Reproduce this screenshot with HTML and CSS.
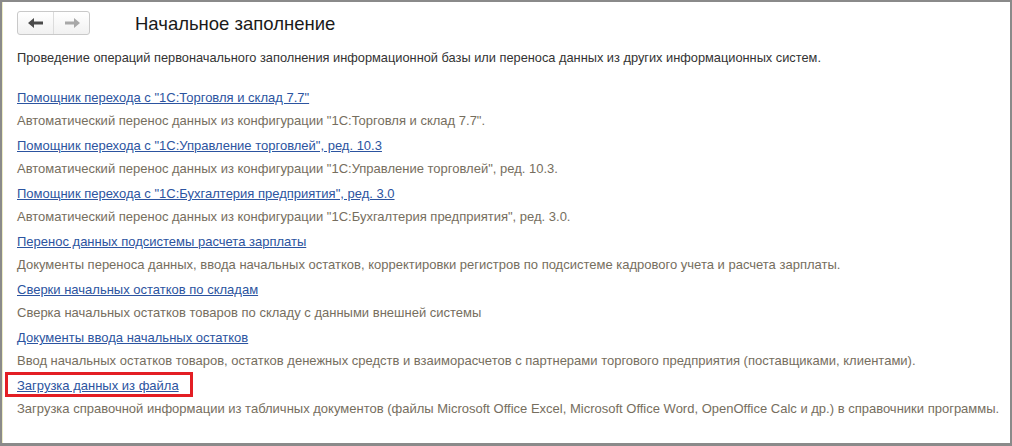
FILE: index.html
```html
<!DOCTYPE html>
<html lang="ru">
<head>
  <meta charset="UTF-8" />
  <title>Начальное заполнение</title>
  <link rel="stylesheet" href="styles.css">
</head>
<body>

  <div class="window">
    <div class="header">
      <div class="nav">
        <button class="nav-btn back" title="Назад">
          <svg width="16" height="10" viewBox="0 0 16 10"><path d="M0 5 L6 0 L6 3.5 L15 3.5 L15 6.5 L6 6.5 L6 10 Z" fill="#4a4a4a"/></svg>
        </button>
        <button class="nav-btn forward" title="Вперед">
          <svg width="16" height="10" viewBox="0 0 16 10"><path d="M16 5 L10 0 L10 3.5 L1 3.5 L1 6.5 L10 6.5 L10 10 Z" fill="#a8a8a8"/></svg>
        </button>
      </div>
      <h1>Начальное заполнение</h1>
    </div>

    <p class="intro">Проведение операций первоначального заполнения информационной базы или переноса данных из других информационных систем.</p>

    <div class="items">
      <div class="item">
        <a href="#">Помощник перехода с "1С:Торговля и склад 7.7"</a>
        <div class="desc">Автоматический перенос данных из конфигурации "1С:Торговля и склад 7.7".</div>
      </div>
      <div class="item">
        <a href="#">Помощник перехода с "1С:Управление торговлей", ред. 10.3</a>
        <div class="desc">Автоматический перенос данных из конфигурации "1С:Управление торговлей", ред. 10.3.</div>
      </div>
      <div class="item">
        <a href="#">Помощник перехода с "1С:Бухгалтерия предприятия", ред. 3.0</a>
        <div class="desc">Автоматический перенос данных из конфигурации "1С:Бухгалтерия предприятия", ред. 3.0.</div>
      </div>
      <div class="item">
        <a href="#">Перенос данных подсистемы расчета зарплаты</a>
        <div class="desc">Документы переноса данных, ввода начальных остатков, корректировки регистров по подсистеме кадрового учета и расчета зарплаты.</div>
      </div>
      <div class="item">
        <a href="#">Сверки начальных остатков по складам</a>
        <div class="desc">Сверка начальных остатков товаров по складу с данными внешней системы</div>
      </div>
      <div class="item">
        <a href="#">Документы ввода начальных остатков</a>
        <div class="desc">Ввод начальных остатков товаров, остатков денежных средств и взаиморасчетов с партнерами торгового предприятия (поставщиками, клиентами).</div>
      </div>
      <div class="item marked">
        <a href="#">Загрузка данных из файла</a>
        <div class="desc">Загрузка справочной информации из табличных документов (файлы Microsoft Office Excel, Microsoft Office Word, OpenOffice Calc и др.) в справочники программы.</div>
      </div>
    </div>
  </div>

</body>
</html>
```

FILE: styles.css
```css
body {
  margin: 0;
  background-color: #8a8a8a;
  font-family: "Liberation Sans", Arial, sans-serif;
}
.window {
  box-sizing: border-box;
  width: 1012px;
  height: 446px;
  border-top: 2px solid #8a8a8a;
  border-left: 2px solid #8a8a8a;
  border-right: 2px solid #8a8a8a;
  border-bottom: 3px solid #8a8a8a;
  background-color: white;
  box-shadow: inset 1px 0 #ecebc4;
  padding: 9px 0 0 15px;
}
.header {
  display: flex;
  align-items: center;
  height: 24px;
}
.nav {
  display: flex;
  width: 73px;
  height: 24px;
  box-sizing: border-box;
  border: 1px solid #c9c9c9;
  border-radius: 3px;
  background: linear-gradient(#ffffff, #f1f1f1);
}
.nav-btn {
  flex: 1;
  border: none;
  background: none;
  padding: 0;
  display: flex;
  align-items: center;
  justify-content: center;
  cursor: pointer;
}
.nav-btn.back {
  border-right: 1px solid #dcdcdc;
}
h1 {
  margin: 1px 0 0 45px;
  font-size: 18.5px;
  font-weight: normal;
  color: #1a1a1a;
}
.intro {
  margin: 15px 0 0 0;
  font-size: 12.8px;
  line-height: 15px;
  color: #333;
}
.items {
  margin-top: 25px;
  display: flex;
  flex-direction: column;
  gap: 10px;
}
.item {
  position: relative;
  display: flex;
  flex-direction: column;
  align-items: flex-start;
  gap: 8px;
}
.item a {
  font-size: 13px;
  line-height: 15px;
  color: #2c54a0;
  text-decoration: underline;
}
.desc {
  font-size: 13px;
  line-height: 15px;
  color: #766e5e;
}
.item.marked::before {
  content: "";
  position: absolute;
  left: -12px;
  top: -6px;
  width: 182px;
  height: 19px;
  border: 3px solid #e31e24;
}
```
